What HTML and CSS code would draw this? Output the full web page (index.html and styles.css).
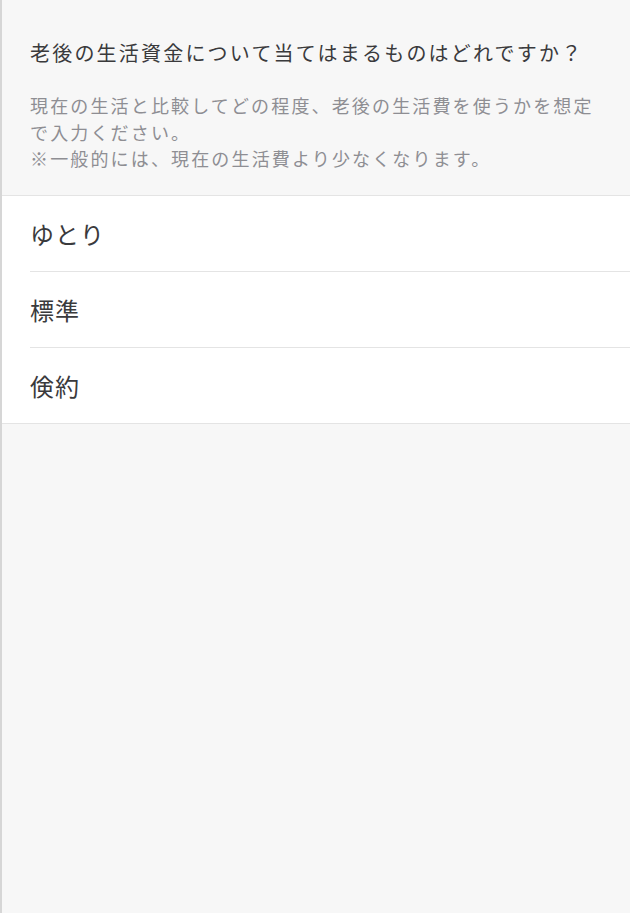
FILE: index.html
```html
<!DOCTYPE html>
<html lang="ja">
<head>
  <meta charset="UTF-8" />
  <meta name="viewport" content="width=device-width, initial-scale=1.0"/>
  <title>老後の生活資金</title>
  <link rel="stylesheet" href="styles.css">
</head>
<body>
  <div class="page">
    <div class="question">
      <h1>老後の生活資金について当てはまるものはどれですか？</h1>
      <p class="note">現在の生活と比較してどの程度、老後の生活費を使うかを想定<br>で入力ください。<br>※一般的には、現在の生活費より少なくなります。</p>
    </div>

    <ul class="choices">
      <li><span>ゆとり</span></li>
      <li><span>標準</span></li>
      <li><span>倹約</span></li>
    </ul>
  </div>
</body>
</html>
```

FILE: styles.css
```css
:root {
  --background: #f7f7f7;
  --foreground: #ffffff;
  --text: #3a3a3c;
  --muted: #8e8e93;
  --border: #e4e4e4;
  --edge: #d6d6d6;
}

body {
  margin: 0;
  padding: 0;
  background: var(--background);
  font-family: "Noto Sans CJK JP", "Noto Sans", sans-serif;
}

.page {
  min-height: 100vh;
  border-left: 2px solid var(--edge);
  box-sizing: border-box;
}

.question {
  padding: 38px 28px 23px;
  border-bottom: 1px solid var(--border);
}

h1 {
  margin: 0;
  font-size: 20px;
  line-height: 30px;
  font-weight: 400;
  letter-spacing: 2.2px;
  color: var(--text);
}

.note {
  margin: 24px 0 0;
  font-size: 18px;
  line-height: 26.5px;
  letter-spacing: 2.15px;
  color: var(--muted);
}

.choices {
  list-style: none;
  margin: 0;
  padding: 0;
  background: var(--foreground);
  border-bottom: 1px solid var(--border);
}

.choices li {
  padding-left: 28px;
}

.choices li span {
  display: flex;
  align-items: center;
  height: 75px;
  border-bottom: 1px solid var(--border);
  font-size: 24px;
  letter-spacing: 1px;
  color: var(--text);
}

.choices li:last-child span {
  border-bottom: none;
}
```
